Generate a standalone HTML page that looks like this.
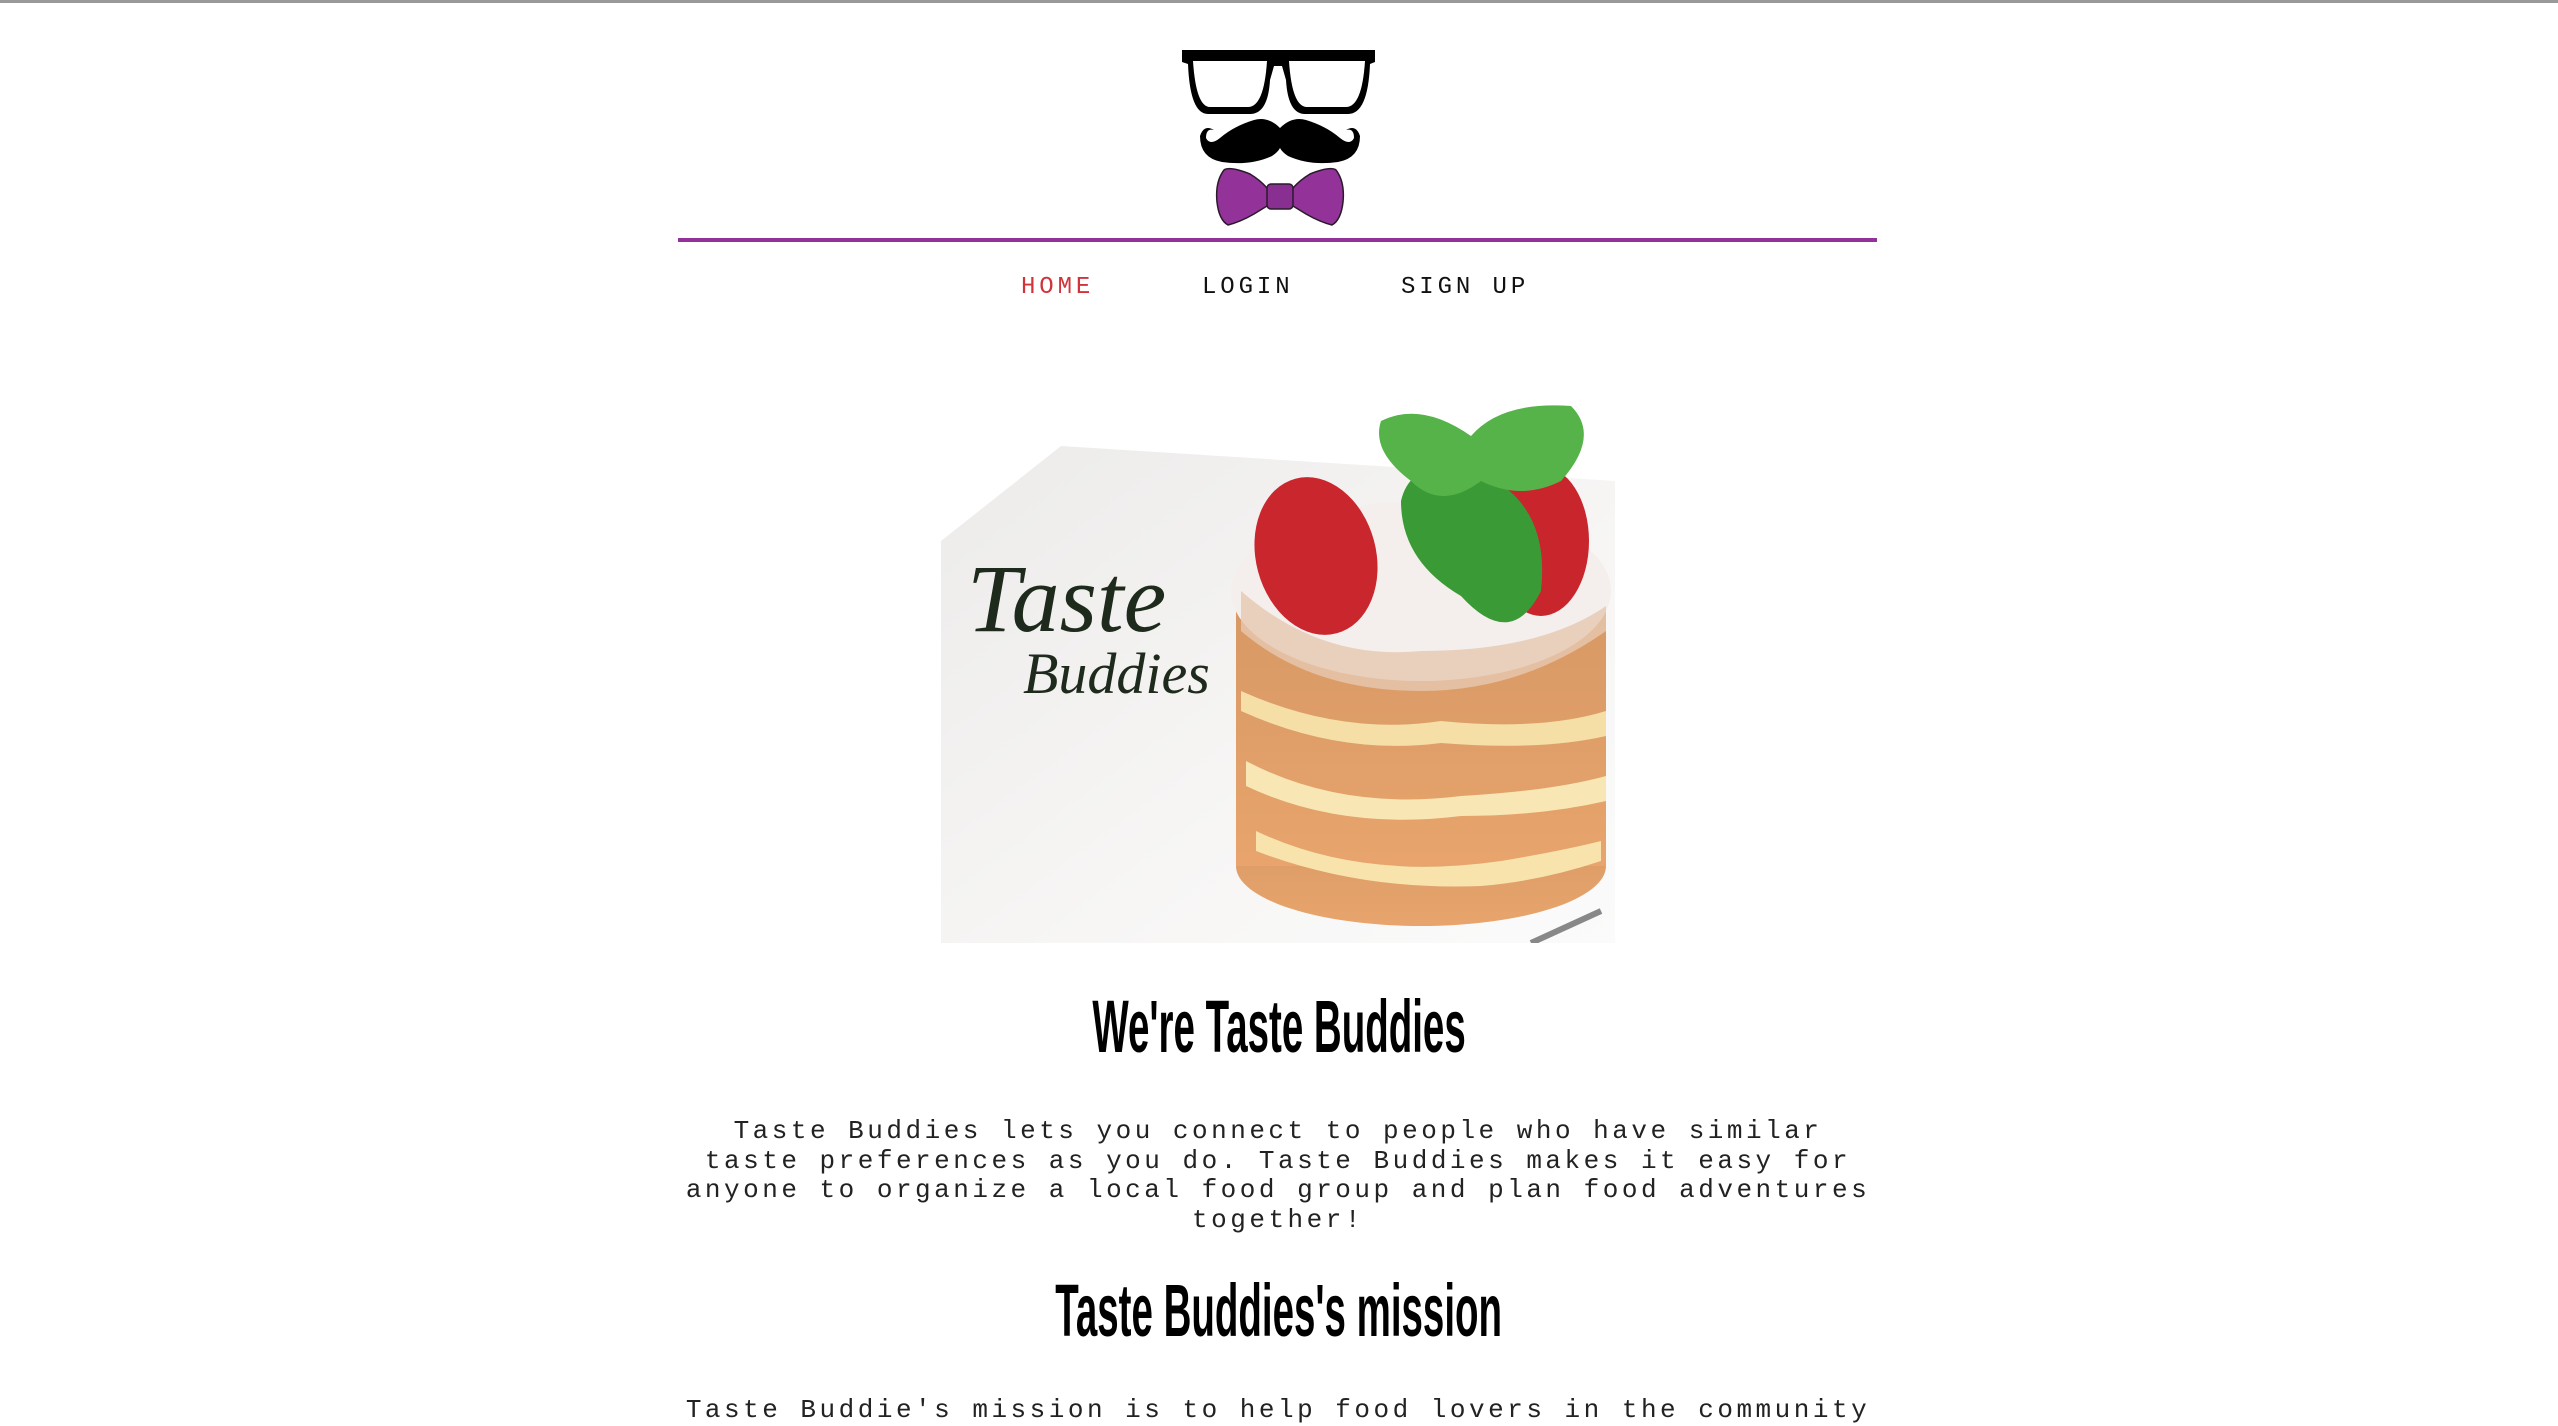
<!DOCTYPE html>
<html><head><meta charset="utf-8"><style>
*{margin:0;padding:0;box-sizing:border-box}
body{width:2558px;height:1412px;overflow:hidden;background:#fff;position:relative;font-family:"Liberation Mono",monospace;color:#111}
.topline{position:absolute;left:0;top:0;width:2558px;height:3px;background:#999}
.logo{position:absolute;left:1170px;top:30px}
.rule{position:absolute;left:678px;top:238px;width:1199px;height:4px;background:#93339a}
.nav a{position:absolute;top:273px;font-size:24px;letter-spacing:3.9px;color:#111;text-decoration:none;line-height:30px}
.hero{position:absolute;left:941px;top:391px}
h1,h2{position:absolute;left:0;width:2558px;text-align:center;font-family:"Liberation Sans Narrow","Liberation Sans",sans-serif;font-weight:bold;color:#000}
h1 span,h2 span{display:inline-block;transform:scaleX(0.52);transform-origin:center}
p{position:absolute;left:678px;width:1200px;text-align:center;font-size:26px;letter-spacing:3.5px;line-height:29.5px;color:#222}
</style></head><body>
<div class="topline"></div>
<svg class="logo" width="220" height="210" viewBox="0 0 220 210">
<rect x="5" y="0" width="210" height="210" fill="#fff"/>
<path d="M12,20 L205,20 L205,32 L200,34 Q198,84 178,84 L135,84 Q118,84 116,50 L112,36 L104,36 L100,50 Q98,84 80,84 L38,84 Q20,84 18,34 L12,32 Z" fill="#000"/>
<path d="M23,31 L97,31 Q94,77 78,77 L40,77 Q26,77 23,31 Z" fill="#fff"/>
<path d="M119,31 L195,31 Q192,77 176,77 L137,77 Q122,77 119,31 Z" fill="#fff"/>
<path d="M110,98 Q98,86 84,90 Q64,96 50,108 Q40,116 36,108 Q36,98 44,100 Q34,94 30,106 Q30,128 52,132 Q80,136 102,126 Q108,122 110,118 Q112,122 118,126 Q140,136 168,132 Q190,128 190,106 Q186,94 176,100 Q184,98 184,108 Q180,116 170,108 Q156,96 136,90 Q122,86 110,98 Z" fill="#000"/>
<path d="M97,158 Q90,150 80,144 Q60,136 54,140 Q45,152 47,172 Q49,190 58,195 Q70,192 84,184 L97,176 L123,176 L136,184 Q150,192 162,195 Q171,190 173,172 Q175,152 166,140 Q160,136 140,144 Q130,150 123,158 Z" fill="#93339a" stroke="#2a1a2a" stroke-width="1.5"/>
<rect x="97" y="154" width="26" height="25" rx="4" fill="#8a2f92" stroke="#2a1a2a" stroke-width="1.5"/>
</svg>
<div class="rule"></div>
<div class="nav">
<a style="left:1021px;color:#d0343a">HOME</a>
<a style="left:1202px">LOGIN</a>
<a style="left:1401px">SIGN UP</a>
</div>
<svg class="hero" width="674" height="552" viewBox="0 0 674 552">
<defs>
<linearGradient id="bg" x1="0" y1="0" x2="1" y2="1"><stop offset="0" stop-color="#ecebea"/><stop offset="0.6" stop-color="#f7f6f5"/><stop offset="1" stop-color="#fbfbfb"/></linearGradient>
<linearGradient id="cake" x1="0" y1="0" x2="0" y2="1"><stop offset="0" stop-color="#d69865"/><stop offset="1" stop-color="#e8a46c"/></linearGradient>
</defs>
<rect width="674" height="552" fill="#fff"/>
<path d="M0,150 L120,55 L674,90 L674,552 L0,552 Z" fill="url(#bg)"/>
<text x="26" y="240" font-family="Liberation Serif,serif" font-style="italic" font-size="96" fill="#1e2a1c">Taste</text>
<text x="82" y="302" font-family="Liberation Serif,serif" font-style="italic" font-size="58" fill="#1e2a1c">Buddies</text>
<ellipse cx="480" cy="475" rx="185" ry="60" fill="url(#cake)"/>
<rect x="295" y="200" width="370" height="275" fill="url(#cake)"/>
<path d="M300,300 Q400,345 500,330 Q600,340 665,320 L665,345 Q600,360 500,352 Q400,365 300,320 Z" fill="#f5dfa6"/>
<path d="M305,370 Q400,420 520,405 Q610,400 665,385 L665,410 Q600,425 520,425 Q400,440 305,395 Z" fill="#f8e6b4"/>
<path d="M315,440 Q420,490 560,470 Q620,460 660,450 L660,470 Q600,490 540,495 Q420,500 315,460 Z" fill="#f8e3ad"/>
<ellipse cx="480" cy="200" rx="190" ry="90" fill="#f4efec"/>
<path d="M300,200 Q380,270 480,260 Q600,260 665,215 L665,240 Q580,300 480,300 Q370,300 300,240 Z" fill="#e6c8b2" opacity="0.8"/>
<ellipse cx="375" cy="165" rx="60" ry="80" fill="#c9262e" transform="rotate(-15 375 165)"/>
<ellipse cx="600" cy="150" rx="48" ry="75" fill="#c8252d"/>
<path d="M460,110 Q470,65 535,80 Q610,110 600,200 Q570,260 520,205 Q460,170 460,110 Z" fill="#3a9a36"/>
<path d="M440,30 Q480,10 530,45 Q560,10 630,15 Q660,45 620,90 Q580,110 540,90 Q500,120 470,90 Q430,60 440,30 Z" fill="#56b34a"/>
<path d="M660,520 L590,552" stroke="#888" stroke-width="6"/>
</svg>
<h1 style="top:982px;font-size:74px;line-height:90px"><span>We're Taste Buddies</span></h1>
<p style="top:1117px">Taste Buddies lets you connect to people who have similar taste preferences as you do. Taste Buddies makes it easy for anyone to organize a local food group and plan food adventures together!</p>
<h2 style="top:1266px;font-size:74px;line-height:90px"><span>Taste Buddies's mission</span></h2>
<p style="top:1396px">Taste Buddie's mission is to help food lovers in the community</p>
</body></html>
